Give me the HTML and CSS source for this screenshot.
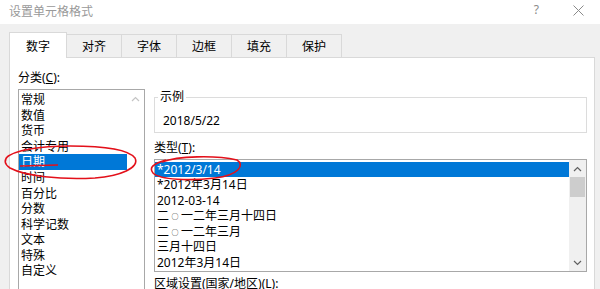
FILE: index.html
```html
<!DOCTYPE html>
<html lang="zh-CN">

<head>
    <meta charset="UTF-8">
    <title>设置单元格格式</title>
    <link rel="stylesheet" href="styles.css">
</head>

<body>
    <div class="dialog">
        <div class="title-bar">
            <span class="title">设置单元格格式</span>
            <span class="help">?</span>
            <svg class="close" width="11" height="11" viewBox="0 0 11 11">
                <path d="M0.5 0.5 L10.5 10.5 M10.5 0.5 L0.5 10.5" stroke="#8a8a8a" stroke-width="1" fill="none" />
            </svg>
        </div>

        <div class="tabs">
            <div class="tab active">数字</div>
            <div class="tab">对齐</div>
            <div class="tab">字体</div>
            <div class="tab">边框</div>
            <div class="tab">填充</div>
            <div class="tab">保护</div>
        </div>

        <div class="panel">
            <div class="col-left">
                <div class="label">分类(<u>C</u>):</div>
                <div class="listbox category-list">
                    <div class="rows">
                        <div class="row">常规</div>
                        <div class="row">数值</div>
                        <div class="row">货币</div>
                        <div class="row">会计专用</div>
                        <div class="row selected">日期</div>
                        <div class="row">时间</div>
                        <div class="row">百分比</div>
                        <div class="row">分数</div>
                        <div class="row">科学记数</div>
                        <div class="row">文本</div>
                        <div class="row">特殊</div>
                        <div class="row">自定义</div>
                    </div>
                    <div class="scrollbar light">
                        <svg class="arrow" width="9" height="6" viewBox="0 0 9 6">
                            <path d="M1 5 L4.5 1.5 L8 5" stroke="#c4c4c4" stroke-width="1.2" fill="none" />
                        </svg>
                    </div>
                </div>
            </div>

            <div class="col-right">
                <fieldset class="sample">
                    <legend>示例</legend>
                    <div class="sample-value">2018/5/22</div>
                </fieldset>

                <div class="label type-label">类型(<u>T</u>):</div>
                <div class="listbox type-list">
                    <div class="rows">
                        <div class="row selected">*2012/3/14</div>
                        <div class="row">*2012年3月14日</div>
                        <div class="row">2012-03-14</div>
                        <div class="row">二<span class="zero">○</span>一二年三月十四日</div>
                        <div class="row">二<span class="zero">○</span>一二年三月</div>
                        <div class="row">三月十四日</div>
                        <div class="row">2012年3月14日</div>
                    </div>
                    <div class="scrollbar">
                        <svg class="arrow" width="9" height="6" viewBox="0 0 9 6">
                            <path d="M1 5 L4.5 1.5 L8 5" stroke="#606060" stroke-width="1.2" fill="none" />
                        </svg>
                        <div class="track">
                            <div class="thumb"></div>
                        </div>
                        <svg class="arrow" width="9" height="6" viewBox="0 0 9 6">
                            <path d="M1 1 L4.5 4.5 L8 1" stroke="#606060" stroke-width="1.2" fill="none" />
                        </svg>
                    </div>
                </div>

                <div class="label region-label">区域设置(国家/地区)(L):</div>
            </div>
        </div>
    </div>

    <!-- hand-drawn red marks on top of the screenshot -->
    <svg class="marks" width="600" height="289" viewBox="0 0 600 289">
        <path d="M6 158 C14 150, 40 146, 70 146 C100 146, 128 149, 135 158 C140 168, 120 176, 95 178 C60 180, 25 176, 10 168 C4 164, 4 160, 8 156"
            stroke="#e3101a" stroke-width="1.6" fill="none" />
        <path d="M20 166 L58 165" stroke="#e3101a" stroke-width="1.6" fill="none" />
        <path d="M162 162 C178 156, 215 155, 237 160 C245 165, 239 175, 215 178 C190 181, 160 180, 153 173 C149 168, 152 164, 166 160"
            stroke="#e3101a" stroke-width="1.6" fill="none" />
    </svg>
</body>

</html>
```

FILE: styles.css
```css
html,
body {
    margin: 0;
    padding: 0;
    width: 600px;
    height: 289px;
    overflow: hidden;
}

body {
    font-family: "Noto Sans", "Noto Sans CJK SC", sans-serif;
    font-size: 12px;
    color: #000;
    background-color: #f0f0f0;
    position: relative;
}

.dialog {
    height: 289px;
}

.title-bar {
    height: 24px;
    background-color: #fff;
    display: flex;
    align-items: center;
    padding-left: 9px;
}

.title {
    color: #999;
    line-height: 16px;
    flex: 1;
}

.help {
    color: #8a8a8a;
    margin-right: 34px;
    line-height: 14px;
    margin-top: -4px;
}

.close {
    margin-right: 16px;
    margin-top: -4px;
}

.tabs {
    display: flex;
    align-items: flex-end;
    height: 25px;
    margin-top: 8px;
    padding-left: 9px;
}

.tab {
    box-sizing: border-box;
    width: 56px;
    height: 23px;
    padding-top: 4px;
    line-height: 16px;
    text-align: center;
    border: 1px solid #d9d9d9;
    border-bottom: none;
    margin-left: -1px;
    background-color: #f0f0f0;
}

.tab:first-child {
    margin-left: 0;
}

.tab.active {
    width: 58px;
    height: 26px;
    padding-top: 6px;
    margin-bottom: -1px;
    background-color: #fff;
    position: relative;
    z-index: 1;
}

.panel {
    box-sizing: border-box;
    width: 586px;
    height: 240px;
    margin-left: 9px;
    background-color: #fff;
    border: 1px solid #d9d9d9;
    border-bottom: none;
    padding: 12px 7px 0 8px;
    display: grid;
    grid-template-columns: 127px 1fr;
    column-gap: 9px;
}

.label {
    line-height: 16px;
    white-space: nowrap;
}

.label u {
    text-underline-offset: 1px;
}

.listbox {
    box-sizing: border-box;
    border: 1px solid #a8a8a8;
    background-color: #fff;
    display: flex;
    margin-top: 3px;
}

.rows {
    flex: 1;
    padding-top: 1px;
}

.row {
    line-height: 15.55px;
    height: 15.55px;
    padding-left: 2px;
    white-space: nowrap;
}

.row.selected {
    background-color: #0078d7;
    color: #fff;
}

/* the small circle of 二○一二 is drawn smaller than a full CJK cell */
.zero {
    display: inline-block;
    width: 12px;
    text-align: center;
    font-size: 7px;
    vertical-align: 1px;
}

.category-list {
    height: 240px;
}

.category-list .rows {
    padding-top: 2.3px;
}

.scrollbar {
    width: 17px;
    display: flex;
    flex-direction: column;
    align-items: center;
    background-color: #f0f0f0;
}

.scrollbar.light {
    background-color: #fff;
}

.arrow {
    margin: 6px 0 5px;
    flex: none;
}

.track {
    flex: 1;
    align-self: stretch;
    padding: 0 1px;
}

.thumb {
    height: 20px;
    background-color: #cdcdcd;
}

.sample {
    margin: 19px 0 0 0;
    border: 1px solid #dcdcdc;
    padding: 8px 4px 3px 8px;
    min-width: 0;
}

.sample legend {
    padding: 0 2px;
    margin-left: -5px;
    line-height: 16px;
}

.sample-value {
    line-height: 16px;
}

.type-label {
    margin-top: 7px;
}

.type-list {
    height: 113px;
}

.type-list .rows {
    padding-top: 1.5px;
}

.region-label {
    margin-top: 4px;
}

.marks {
    position: absolute;
    left: 0;
    top: 0;
    pointer-events: none;
}
```
